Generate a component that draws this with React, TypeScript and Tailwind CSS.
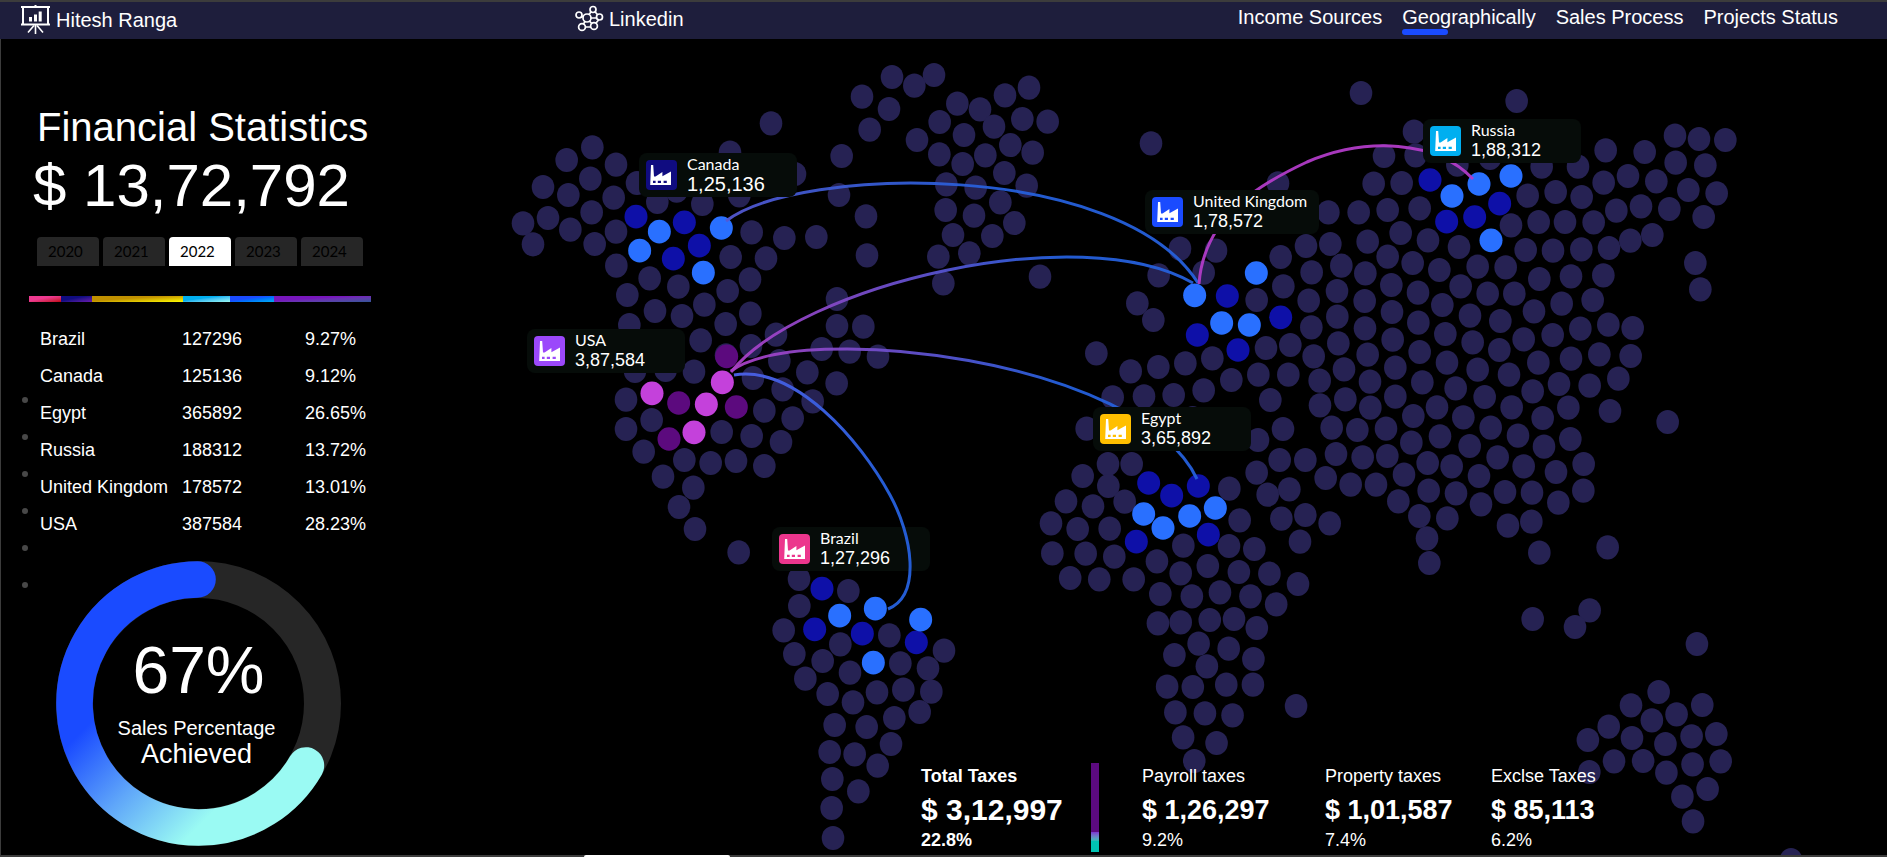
import React from "react";

type Point = [number, number];
type Tone = "land" | "navy" | "azure" | "plum" | "orchid";

interface Cluster {
  x: number;
  y: number;
  unitX: number;
  unitY: number;
  tone: Tone;
  dots: Point[];
}

const MAP = { x: 480, y: 39, width: 1407, height: 816 };

const TONES: Record<Tone, string> = {
  land: "#262253",
  navy: "#0e10a8",
  azure: "#2970ff",
  plum: "#5c0a7e",
  orchid: "#c441db",
};

const cluster = (x: number, y: number, tone: Tone, dots: Point[], unitX = 3): Cluster => ({
  x,
  y,
  unitX,
  unitY: 3,
  tone,
  dots,
});

const CLUSTERS: Cluster[] = [
  // North America, upper half
  cluster(480, 40, "land", [
    [873, 250], [750, 338], [337, 322], [260, 360], [408, 374], [331, 416], [189, 441], [265, 465],
    [401, 473], [471, 429], [945, 402], [335, 517], [204, 534], [129, 550], [159, 613], [271, 569],
    [344, 612], [408, 575], [409, 677], [532, 486], [590, 452], [667, 492], [778, 466], [815, 577],
    [913, 594], [1009, 591], [752, 651], [858, 655],
  ]),
  cluster(480, 40, "navy", [[468, 530], [613, 547], [658, 617], [580, 656]]),
  cluster(480, 40, "azure", [[538, 575], [479, 632], [724, 564], [670, 698]]),
  // North America, lower half
  cluster(480, 270, "land", [
    [509, 25], [595, 50], [743, 63], [810, 28], [442, 75], [525, 123], [673, 104], [606, 138],
    [811, 131], [737, 162], [448, 165], [662, 211], [813, 228], [888, 194], [738, 256], [642, 305],
    [898, 273], [819, 324], [908, 358], [982, 307], [1025, 237], [998, 394], [465, 303], [557, 300],
    [438, 389], [438, 477], [515, 450], [725, 486], [815, 498], [853, 422], [938, 445], [903, 516],
    [491, 545], [549, 620], [613, 570], [692, 579], [768, 573], [853, 588], [640, 653], [597, 711],
    [645, 777], [776, 847], [1070, 340], [1109, 245], [1194, 260],
  ]),
  cluster(480, 270, "plum", [[740, 259], [596, 399], [769, 411], [567, 507]]),
  cluster(480, 270, "orchid", [[727, 337], [516, 370], [679, 403], [642, 487]]),
  // South America
  cluster(740, 510, "land", [
    [177, 207], [325, 243], [178, 288], [131, 361], [301, 403], [448, 376], [163, 432], [248, 453],
    [330, 488], [481, 460], [564, 475], [612, 422], [196, 506], [263, 552], [339, 577], [411, 547],
    [490, 539], [574, 545], [539, 606], [463, 624], [284, 645], [380, 651], [269, 726], [344, 733],
    [453, 702], [413, 767], [277, 807], [355, 844], [275, 894], [279, 984], [937, 130], [1037, 131],
  ]),
  cluster(740, 510, "navy", [[246, 236], [224, 358], [367, 371], [529, 397]]),
  cluster(740, 510, "azure", [[299, 317], [406, 296], [542, 329], [400, 458]]),
  // Greenland and the North Atlantic
  cluster(800, 40, "land", [
    [276, 111], [343, 137], [402, 105], [186, 170], [267, 207], [209, 269], [125, 348], [117, 465],
    [198, 529], [201, 646], [472, 191], [540, 208], [615, 166], [687, 143], [419, 246], [492, 285],
    [582, 260], [667, 237], [743, 245], [351, 300], [418, 343], [556, 346], [631, 315], [698, 338],
    [488, 372], [613, 399], [439, 433], [527, 443], [680, 437], [601, 487], [437, 510], [522, 527],
    [643, 549], [459, 585], [577, 588], [415, 650], [508, 640], [430, 730], [720, 710], [1053, 310],
    [111, 777], [111, 858], [190, 860],
  ]),
  // Europe, the Middle East and northern Africa
  cluster(1020, 240, "land", [
    [480, 26], [588, 32], [551, 98], [416, 106], [352, 190], [400, 240], [229, 340], [332, 394],
    [415, 381], [496, 370], [577, 355], [278, 472], [372, 469], [461, 465], [551, 451], [634, 420],
    [715, 404], [738, 324], [811, 315], [805, 404], [710, 180], [782, 51], [790, 139], [858, 18],
    [931, 12], [875, 97], [964, 77], [866, 182], [951, 153], [1036, 100], [1043, 5], [952, 230],
    [874, 262], [955, 310], [1034, 183], [1035, 265], [881, 349], [1043, 344], [972, 388], [899, 422],
    [976, 478], [900, 496], [1050, 425], [1051, 503], [935, 563], [1012, 570], [948, 642], [1028, 652],
    [917, 714], [992, 734], [1068, 734], [751, 480], [789, 567], [714, 600], [779, 660], [856, 660],
    [710, 698], [808, 748], [743, 764], [784, 836], [856, 825], [929, 850], [840, 905], [628, 746],
    [659, 841], [200, 566], [518, 534], [264, 672], [335, 672], [188, 708], [265, 738], [138, 784],
    [219, 799], [314, 785], [93, 850], [173, 867], [269, 866], [490, 917], [627, 918], [703, 927],
  ]),
  cluster(1020, 240, "navy", [
    [622, 168], [782, 232], [532, 285], [654, 330], [386, 729], [455, 767], [535, 738], [565, 884],
    [349, 905],
  ]),
  cluster(1020, 240, "azure", [
    [709, 99], [524, 166], [605, 249], [688, 255], [371, 822], [429, 864], [509, 828], [586, 804],
  ]),
  // Scandinavia and western Russia
  cluster(1120, 0, "land", [[723, 279], [474, 550], [761, 551], [625, 637], [716, 637]]),
  // Northern and central Asia
  cluster(1380, 80, "land", [
    [410, 63], [102, 155], [12, 228], [107, 226], [65, 309], [232, 254], [330, 234], [485, 260],
    [594, 260], [677, 211], [794, 216], [885, 167], [957, 177], [1036, 180], [887, 248], [976, 256],
    [671, 308], [744, 288], [829, 304], [925, 330], [1010, 340], [443, 347], [527, 336], [605, 351],
    [709, 392], [783, 379], [868, 387], [971, 411], [119, 385], [23, 390], [62, 459], [144, 481],
    [237, 501], [393, 436], [476, 426], [555, 426], [641, 427], [751, 482], [817, 465], [437, 510],
    [519, 512], [604, 508], [687, 504], [946, 549], [961, 628], [23, 530], [98, 549], [178, 570],
    [293, 560], [377, 562], [478, 597], [573, 589], [670, 586], [34, 615], [114, 638], [242, 619],
    [323, 641], [403, 641], [545, 671], [638, 660], [187, 675], [36, 696], [115, 728], [196, 762],
    [270, 707], [361, 723], [462, 694], [601, 746], [685, 734], [758, 744], [518, 765], [431, 778],
    [38, 779], [119, 816], [278, 787], [358, 810], [475, 848], [573, 836], [658, 823], [752, 828],
    [46, 863], [201, 848], [293, 869], [387, 884],
  ]),
  cluster(1380, 80, "navy", [[150, 300], [359, 371], [284, 411], [200, 425]]),
  cluster(1380, 80, "azure", [[216, 348], [297, 312], [393, 288], [333, 481]]),
  // Southern and eastern Asia
  cluster(1300, 340, "land", [
    [258, 266], [286, 170], [367, 127], [467, 145], [554, 171], [698, 154], [777, 132], [869, 137],
    [955, 116], [635, 202], [728, 234], [805, 203], [930, 213], [1103, 246], [411, 202], [490, 232],
    [572, 263], [654, 287], [732, 320], [811, 297], [340, 228], [334, 308], [420, 289], [509, 318],
    [593, 352], [671, 379], [768, 396], [851, 372], [850, 452], [312, 404], [383, 369], [455, 379],
    [537, 408], [615, 456], [696, 458], [775, 488], [386, 452], [468, 460], [543, 493], [295, 484],
    [358, 528], [442, 535], [381, 595], [388, 669], [624, 557], [694, 545], [718, 638], [923, 622],
    [698, 837], [869, 811], [825, 861], [262, 348],
  ]),
  // Southern Africa and Australia
  cluster(
    1060,
    560,
    "land",
    [
      [21, 54], [81, 58], [152, 58], [112, -10], [200, 4], [249, 40], [305, 18], [369, 36],
      [432, 41], [491, 72], [207, 102], [272, 109], [330, 97], [393, 109], [446, 133], [202, 190],
      [249, 187], [309, 180], [359, 177], [406, 204], [286, 251], [348, 266], [236, 285], [303, 319],
      [399, 297], [221, 380], [274, 381], [343, 374], [398, 374], [238, 457], [299, 460], [356, 466],
      [487, 438], [254, 532], [323, 549], [277, 603], [1314, 252], [1235, 396], [1178, 436], [1325, 435],
      [1272, 463], [1221, 481], [1132, 500], [1089, 540], [1180, 534], [1249, 552], [1303, 529], [1354, 522],
      [1143, 604], [1203, 603], [1092, 636], [1251, 638], [1305, 613], [1363, 604], [1284, 710], [1336, 687],
      [1306, 784], [1508, 900],
    ],
    2.063,
  ),
];

const ARCS = [
  { d: "M726 221 C800 165 1120 160 1198 283", stroke: "url(#arc-canada)" },
  { d: "M731 372 C800 285 1080 218 1193 283", stroke: "url(#arc-usa)" },
  { d: "M731 371 C800 320 1140 358 1197 479", stroke: "url(#arc-usa)" },
  { d: "M1199 284 C1204 215 1262 183 1307 162 C1366 137 1436 140 1473 179", stroke: "#b13bc8" },
];

const BRAZIL_ARC = "M734 375 C795 365 860 440 890 495 C912 535 922 595 888 609";

interface Pin {
  name: string;
  value: string;
  x: number;
  y: number;
  box: string;
  badge: string;
  size: string;
}

const PINS: Pin[] = [
  { name: "Canada", value: "1,25,136", x: 639, y: 153, box: "w-[158px]", badge: "bg-[#100c80]", size: "text-[20px]" },
  { name: "USA", value: "3,87,584", x: 527, y: 329, box: "w-[158px]", badge: "bg-[#9b48fb]", size: "text-[18px]" },
  { name: "United Kingdom", value: "1,78,572", x: 1145, y: 190, box: "w-[174px]", badge: "bg-[#1a4bff]", size: "text-[18px]" },
  { name: "Russia", value: "1,88,312", x: 1423, y: 119, box: "w-[158px]", badge: "bg-[#00aff0]", size: "text-[18px]" },
  { name: "Egypt", value: "3,65,892", x: 1093, y: 407, box: "w-[158px]", badge: "bg-[#ffbf00]", size: "text-[18px]" },
  { name: "Brazil", value: "1,27,296", x: 772, y: 527, box: "w-[158px]", badge: "bg-[#ec368d]", size: "text-[18px]" },
];

const YEARS = ["2020", "2021", "2022", "2023", "2024"];

const SHARES = [
  "w-[32px] bg-linear-to-br from-[#ee3a90] from-40% to-[#c00000]",
  "w-[31px] bg-linear-to-br from-[#100c80] from-40% to-[#6a18b0]",
  "w-[91px] bg-linear-to-br from-[#c09000] from-40% to-[#ffff00]",
  "w-[47px] bg-linear-to-br from-[#00aff0] from-40% to-[#9afaf3]",
  "w-[44px] bg-linear-to-br from-[#1a4bff] from-40% to-[#00aff0]",
  "w-[97px] bg-linear-to-br from-[#7716bc] from-40% to-[#2f5597]",
];

const ROWS = [
  ["Brazil", "127296", "9.27%"],
  ["Canada", "125136", "9.12%"],
  ["Egypt", "365892", "26.65%"],
  ["Russia", "188312", "13.72%"],
  ["United Kingdom", "178572", "13.01%"],
  ["USA", "387584", "28.23%"],
];

const TAXES = [
  { name: "Payroll taxes", value: "$ 1,26,297", share: "9.2%" },
  { name: "Property taxes", value: "$ 1,01,587", share: "7.4%" },
  { name: "Exclse Taxes", value: "$ 85,113", share: "6.2%" },
];

const NAV = ["Income Sources", "Geographically", "Sales Process", "Projects Status"];

function BoardIcon() {
  return (
    <svg viewBox="0 0 29 29" className="h-[29px] w-[29px]" fill="none" stroke="#fff" aria-hidden="true">
      <path d="M14.5 0v2" strokeWidth="2" />
      <path d="M0 2h29M0 19.5h29" strokeWidth="2" />
      <path d="M2 2v17M27 2v17" strokeWidth="2" />
      <path d="M14.5 20v9M13 20.5l-6 7M16 20.5l6 7" strokeWidth="1.6" />
      <path d="M9.5 12v4.5M14.5 9.5v7M19.2 6.5v10" strokeWidth="3" />
    </svg>
  );
}

function NetworkIcon() {
  return (
    <svg viewBox="0 0 30 28" className="h-7 w-[30px]" fill="none" stroke="#fff" strokeWidth="1.7" aria-hidden="true">
      <circle cx="13" cy="13" r="4" />
      <circle cx="5" cy="10" r="3" />
      <circle cx="8" cy="22" r="3.4" />
      <circle cx="19" cy="4.5" r="3" />
      <circle cx="25.5" cy="12" r="3" />
      <circle cx="20" cy="21" r="3.4" />
      <path d="M7.8 11.2l1.6.6M11 16.5l-1.6 2.6M15 9.6l2-2.6M21 6.8l2.6 3M24.5 15l-2.6 3.2M15.4 16l2.2 2.4M11.4 22h5.2M17 13h5.5" />
    </svg>
  );
}

function FactoryIcon() {
  return (
    <svg viewBox="0 0 22 20" className="h-[20px] w-[22px]" aria-hidden="true">
      <path
        fill="#fff"
        fillRule="evenodd"
        d="M1 0H3.2L4 11.6L5.6 11.4L12.4 7V11.2L21 6.6V20H.2ZM3 15.8V18H5.6V15.8ZM7.8 15.8V18H11V15.8ZM13.6 15.8V18H16.8V15.8Z"
      />
    </svg>
  );
}

function Header() {
  return (
    <header className="flex h-[39px] items-start border-t-2 border-[#3c3c3c] bg-[#1e1e3c] pr-[49px] text-[20px] leading-6 text-white">
      <div className="flex w-[574px] shrink-0 items-center gap-[6px] pt-[3px] pl-[21px]">
        <BoardIcon />
        <span>Hitesh Ranga</span>
      </div>
      <a href="#linkedin" className="flex items-center gap-[5px] pt-[3px]">
        <NetworkIcon />
        <span>Linkedin</span>
      </a>
      <nav className="ml-auto flex gap-5 pt-[3px]">
        {NAV.map((item) => (
          <a key={item} href={"#" + item.toLowerCase().replace(" ", "-")} className="whitespace-nowrap">
            {item}
            {item === "Geographically" && <span className="block h-[6px] w-[46px] rounded-full bg-[#1a4bff]" />}
          </a>
        ))}
      </nav>
    </header>
  );
}

function Donut() {
  return (
    <div className="mt-[18px] ml-[27px] grid h-[285px] w-[285px] text-white">
      <svg viewBox="0 0 285 285" className="col-start-1 row-start-1" fill="none" aria-hidden="true">
        <defs>
          <linearGradient id="progress" gradientUnits="userSpaceOnUse" x1="0" y1="196" x2="106" y2="302">
            <stop offset="0" stopColor="#1a4bff" />
            <stop offset="0.5" stopColor="#5fa6f9" />
            <stop offset="1" stopColor="#9afaf3" />
          </linearGradient>
        </defs>
        <circle cx="142.5" cy="142.5" r="124" stroke="#262626" strokeWidth="37" />
        <path
          d="M141.5 18.5A124 124 0 1 0 249.9 204.5"
          stroke="url(#progress)"
          strokeWidth="36.6"
          strokeLinecap="round"
        />
      </svg>
      <div className="col-start-1 row-start-1 flex flex-col items-center pt-[76px]">
        <span className="text-[66px] leading-[66px]">67%</span>
        <span className="mt-[13px] flex flex-col items-center pr-[4px]">
          <span className="text-[20px] leading-6">Sales Percentage</span>
          <span className="text-[27px] leading-7">Achieved</span>
        </span>
      </div>
    </div>
  );
}

function Sidebar() {
  return (
    <aside className="flex w-[479px] shrink-0 gap-px pl-[21px] text-white">
      <div className="flex flex-col gap-[31px] pt-[358px]">
        {ROWS.map(([name]) => (
          <span key={name} className="h-[6px] w-[6px] rounded-full bg-[#484848]" />
        ))}
      </div>
      <div className="pt-[68px]">
        <h1 className="pl-[8px] text-[40px] leading-[40px]">Financial Statistics</h1>
        <p className="mt-[9px] pl-[4px] text-[60px] leading-[60px]">$ 13,72,792</p>
        <div className="mt-[21px] ml-[8px] flex gap-1 font-[Lato,sans-serif] text-[15px] text-black">
          {YEARS.map((year) => (
            <button
              key={year}
              type="button"
              className={
                "h-[29px] w-[62px] rounded-t-[4px] pl-[11px] text-left " +
                (year === "2022" ? "bg-white" : "bg-[#262626]")
              }
            >
              {year}
            </button>
          ))}
        </div>
        <div className="mt-[30px] flex h-[6px]">
          {SHARES.map((share) => (
            <span key={share} className={share} />
          ))}
        </div>
        <table className="mt-[19px] ml-[11px] text-left text-[18px] whitespace-nowrap">
          <tbody>
            {ROWS.map(([name, amount, percent]) => (
              <tr key={name} className="h-[37px]">
                <th scope="row" className="w-[142px] p-0 font-normal">{name}</th>
                <td className="w-[123px] p-0">{amount}</td>
                <td className="p-0">{percent}</td>
              </tr>
            ))}
          </tbody>
        </table>
        <Donut />
      </div>
    </aside>
  );
}

function WorldMap() {
  const viewBox = `${MAP.x} ${MAP.y} ${MAP.width} ${MAP.height}`;
  return (
    <div className="relative col-start-1 row-start-1 aspect-[1407/816] w-full self-start">
      <svg viewBox={viewBox} className="block w-full" aria-hidden="true">
        <defs>
          <linearGradient id="arc-usa" gradientUnits="userSpaceOnUse" x1="731" y1="0" x2="1060" y2="0">
            <stop offset="0" stopColor="#ac3fc6" />
            <stop offset="0.35" stopColor="#7f4ac8" />
            <stop offset="1" stopColor="#2560dc" />
          </linearGradient>
          <linearGradient id="arc-canada" gradientUnits="userSpaceOnUse" x1="726" y1="0" x2="1000" y2="0">
            <stop offset="0" stopColor="#5558d2" />
            <stop offset="0.3" stopColor="#4059d0" />
            <stop offset="1" stopColor="#2560dc" />
          </linearGradient>
        </defs>
        {CLUSTERS.map((c, i) => (
          <g key={i} fill={TONES[c.tone]}>
            {c.dots.map(([px, py], j) => (
              <ellipse
                key={j}
                cx={c.x + px / c.unitX}
                cy={c.y + py / c.unitY}
                rx={c.tone === "land" ? 11.3 : 11.5}
                ry={c.tone === "land" ? 12.1 : 11.8}
              />
            ))}
          </g>
        ))}
        <g fill="none" strokeWidth="3">
          {ARCS.map((arc) => (
            <path key={arc.d} d={arc.d} stroke={arc.stroke} strokeOpacity="0.94" />
          ))}
        </g>
      </svg>
      {PINS.map((pin) => (
        <div
          key={pin.name}
          className={"absolute flex h-[44px] gap-[10px] rounded-lg bg-[#060c09] pl-[7px] text-white " + pin.box}
          style={{
            left: `${((pin.x - MAP.x) / MAP.width) * 100}%`,
            top: `${((pin.y - MAP.y) / MAP.height) * 100}%`,
          }}
        >
          <span className={"mt-[7px] flex h-[30px] w-[31px] items-center justify-center rounded-[4px] " + pin.badge}>
            <FactoryIcon />
          </span>
          <span className="flex flex-col pt-px whitespace-nowrap">
            <span className="font-[Lato,sans-serif] text-[16px] leading-5">{pin.name}</span>
            <span className={"leading-5 " + pin.size}>{pin.value}</span>
          </span>
        </div>
      ))}
      <svg viewBox={viewBox} className="pointer-events-none absolute inset-0 w-full" aria-hidden="true">
        <defs>
          <linearGradient id="arc-brazil" gradientUnits="userSpaceOnUse" x1="734" y1="375" x2="880" y2="500">
            <stop offset="0" stopColor="#4a5de0" />
            <stop offset="1" stopColor="#245cd2" />
          </linearGradient>
        </defs>
        <path d={BRAZIL_ARC} fill="none" stroke="url(#arc-brazil)" strokeWidth="3" />
      </svg>
    </div>
  );
}

function TaxSummary() {
  return (
    <section className="z-10 col-start-1 row-start-1 grid grid-cols-[170px_51px_183px_166px_auto] self-end pb-[3px] pl-[441px] text-[18px] leading-[22px] text-white">
      <div className="flex flex-col pt-[2px] font-bold">
        <span>Total Taxes</span>
        <span className="mt-[7px] text-[30px] leading-8">$ 3,12,997</span>
        <span className="mt-[3px]">22.8%</span>
      </div>
      <span className="h-[89px] w-[8px] bg-linear-to-b from-[#5c0a80] from-77% via-[#7a3cd0] via-78% to-[#00c4b4] to-88%" />
      {TAXES.map((tax) => (
        <div key={tax.name} className="flex flex-col pt-[2px]">
          <span>{tax.name}</span>
          <span className="mt-[7px] text-[27px] leading-8 font-bold">{tax.value}</span>
          <span className="mt-[3px]">{tax.share}</span>
        </div>
      ))}
    </section>
  );
}

export default function App() {
  return (
    <div className="flex min-h-screen flex-col bg-black font-['Liberation_Sans',Arial,sans-serif]">
      <Header />
      <main className="flex flex-1 border-l border-[#3c3c3c]">
        <Sidebar />
        <div className="grid min-w-0 flex-1">
          <WorldMap />
          <TaxSummary />
        </div>
      </main>
      <footer className="h-[2px] bg-[#3c3c3c] pl-[584px]">
        <div className="h-[2px] w-[146px] rounded-t-full bg-white" />
      </footer>
    </div>
  );
}
